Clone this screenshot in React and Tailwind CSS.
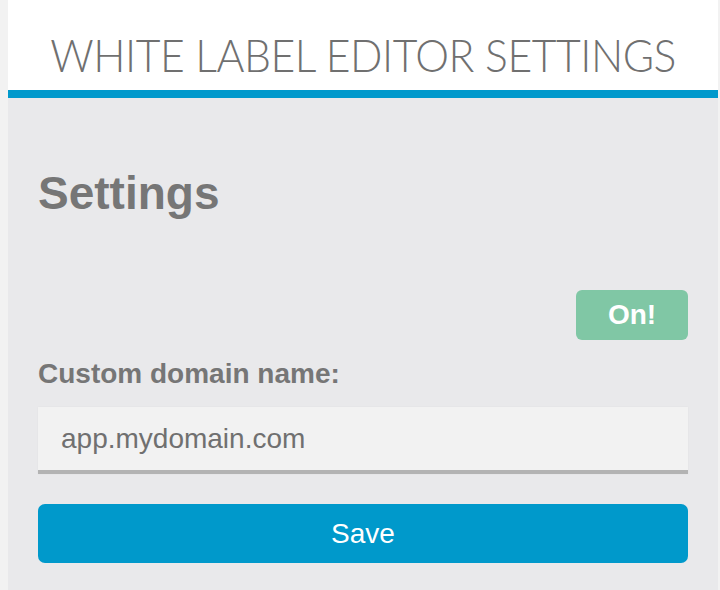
export default function App() {
  return (
    <div className="w-[720px] h-[590px] bg-[#f2f2f2] flex overflow-hidden">
      <div className="ml-[8px] w-[710px] h-full bg-[#e9e9eb] flex flex-col">
        <div className="h-[98px] bg-white border-b-[8px] border-[#0099cc] flex items-center justify-center">
          <h1
            className="text-[46px] leading-none font-light text-[#707070] tracking-[-0.5px] mt-[20px] scale-x-[0.928] whitespace-nowrap"
            style={{ fontFamily: 'Lato, "Open Sans", sans-serif' }}
          >
            WHITE LABEL EDITOR SETTINGS
          </h1>
        </div>
        <div
          className="px-[30px] pt-[73px] flex flex-col"
          style={{ fontFamily: '"Liberation Sans", Arial, sans-serif' }}
        >
          <h2 className="text-[46px] leading-[45px] font-bold text-[#767676]">Settings</h2>
          <div className="flex justify-end mt-[74px]">
            <button className="w-[112px] h-[50px] rounded-[6px] bg-[#80c7a5] text-white text-[28px] font-bold leading-none">
              On!
            </button>
          </div>
          <label className="mt-[20px] text-[28px] leading-[28px] font-bold text-[#767676]">
            Custom domain name:
          </label>
          <div className="mt-[19px] h-[67px] bg-[#f2f2f2] border-b-[4px] border-[#b3b3b3] flex items-center pl-[23px] text-[28px] text-[#707070] shadow-[0_0_2px_rgba(0,0,0,0.04)]">
            app.mydomain.com
          </div>
          <button className="mt-[30px] h-[59px] rounded-[7px] bg-[#0099cb] text-white text-[28px] leading-none">
            Save
          </button>
        </div>
      </div>
    </div>
  );
}
